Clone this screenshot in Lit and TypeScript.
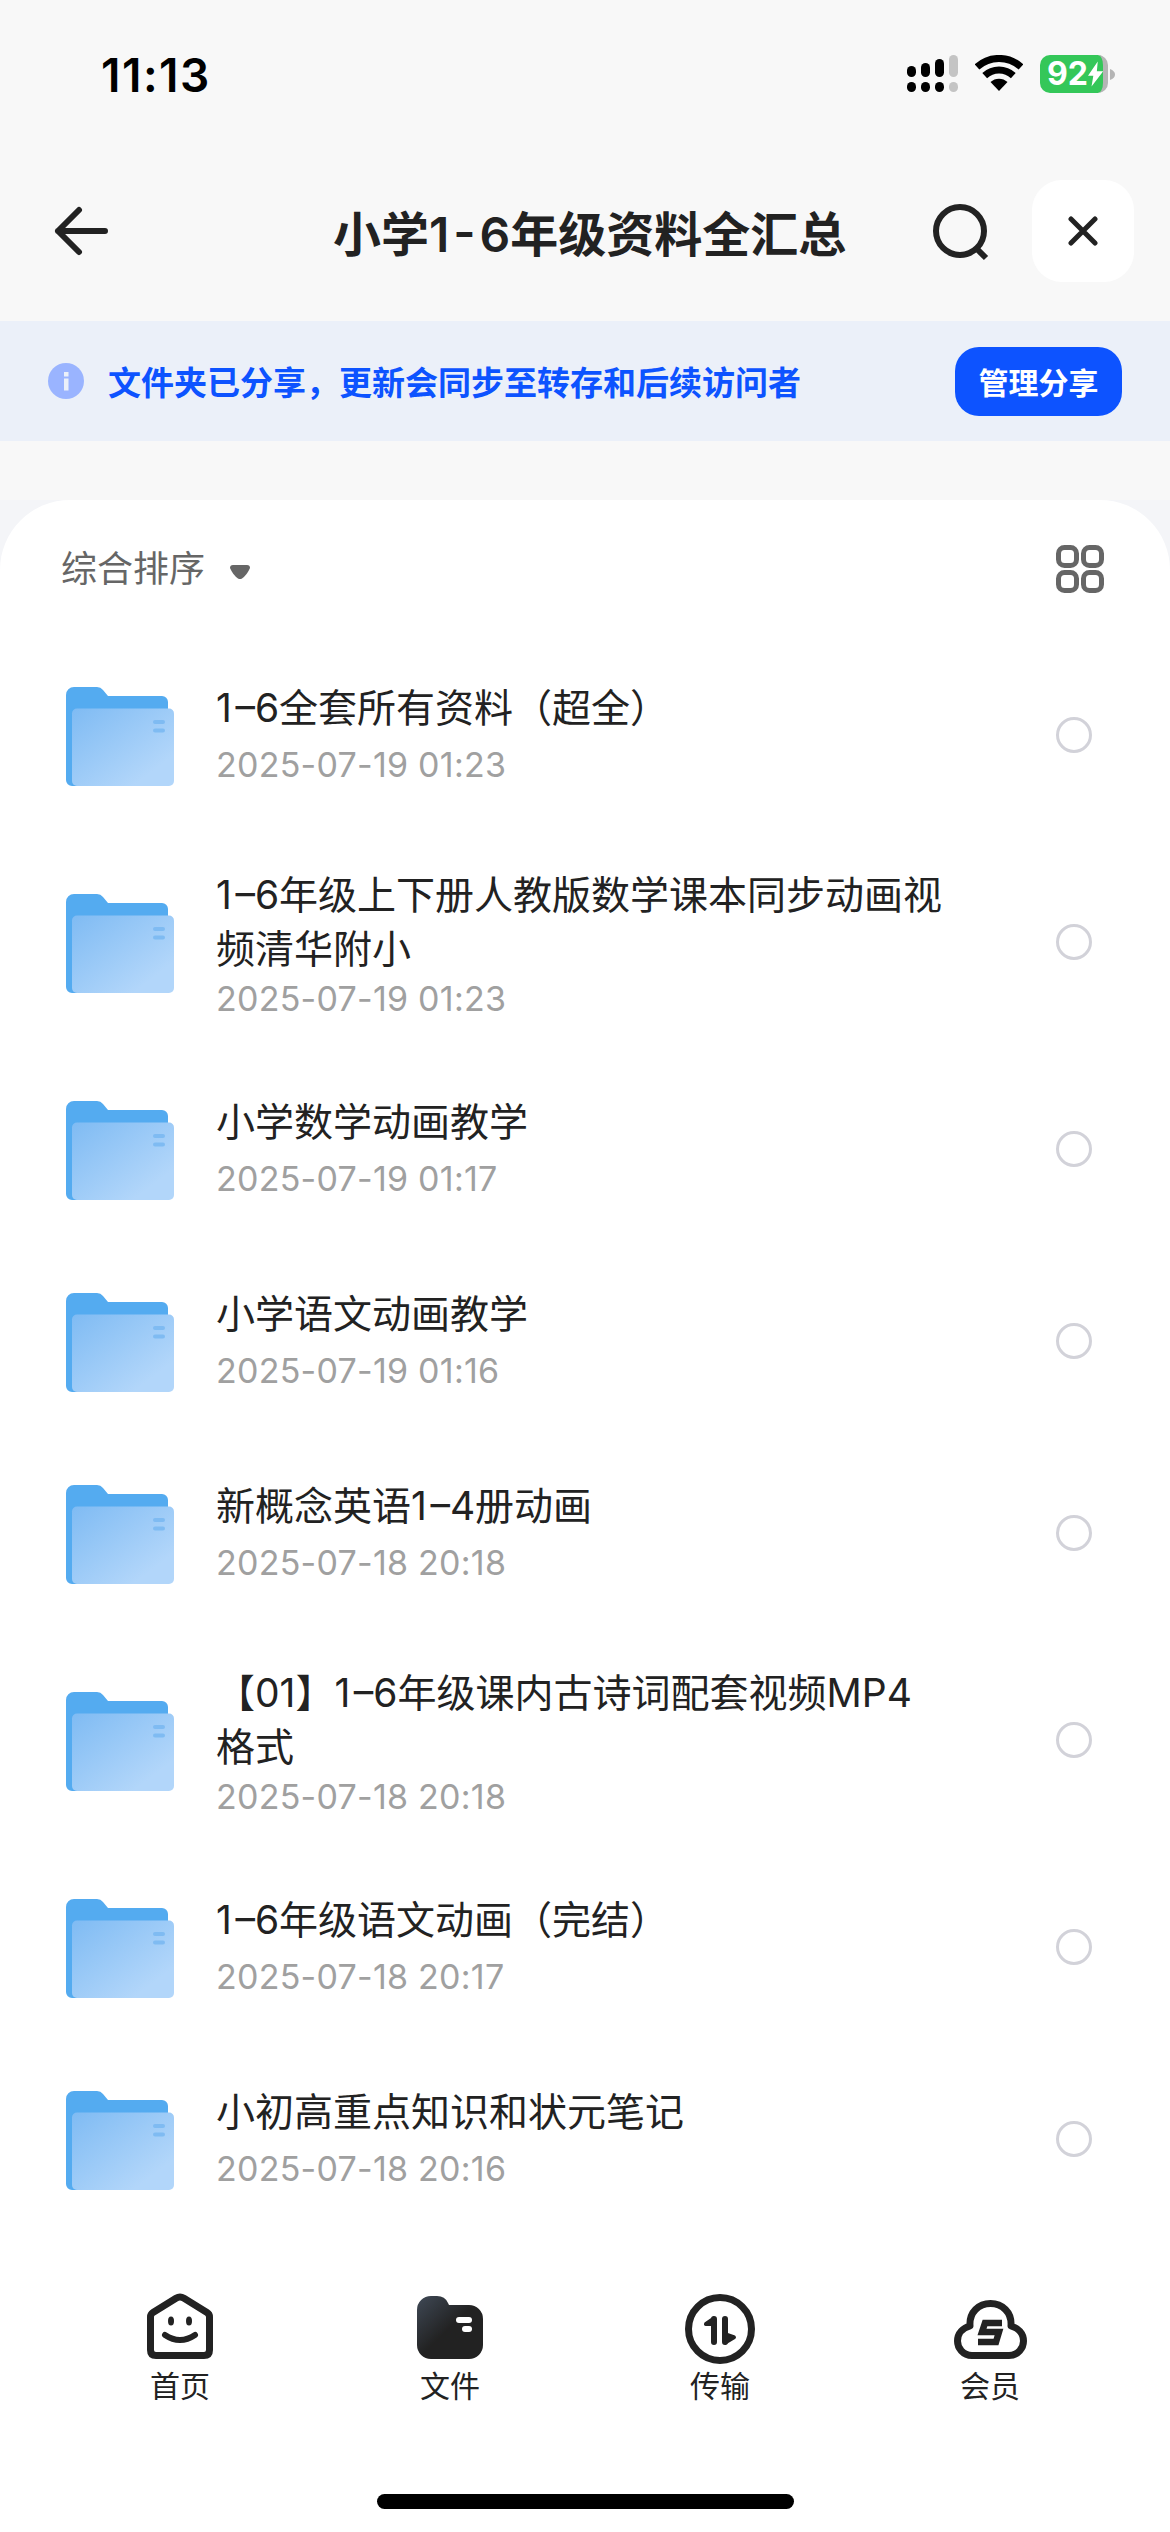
import { LitElement, html, css, svg } from 'lit';
import { customElement } from 'lit/decorators.js';
import { classMap } from 'lit/directives/class-map.js';

const FONT = css`Inter, "Noto Sans CJK SC", sans-serif`;

// hair space before the dash: the reference's digits sit wider than Inter's
const DASH = '\u200A–';

const files = [
  { name: `1${DASH}6全套所有资料（超全）`, date: '2025-07-19 01:23' },
  { name: `1${DASH}6年级上下册人教版数学课本同步动画视频清华附小`, date: '2025-07-19 01:23', two: true },
  { name: '小学数学动画教学', date: '2025-07-19 01:17' },
  { name: '小学语文动画教学', date: '2025-07-19 01:16' },
  { name: `新概念英语1${DASH}4册动画`, date: '2025-07-18 20:18' },
  { name: `【01】1${DASH}6年级课内古诗词配套视频MP4格式`, date: '2025-07-18 20:18', two: true },
  { name: `1${DASH}6年级语文动画（完结）`, date: '2025-07-18 20:17' },
  { name: '小初高重点知识和状元笔记', date: '2025-07-18 20:16' },
];

const folderIcon = html`<svg class="folder" width="108" height="99" viewBox="0 0 108 99">
  <defs>
    <linearGradient id="front" x1="0" y1="0" x2="1" y2="1">
      <stop offset="0" stop-color="#7fbbf3" />
      <stop offset="0.8" stop-color="#b2d6fa" />
    </linearGradient>
  </defs>
  <path fill="#54abf0" d="M0 8a8 8 0 0 1 8-8h23a8 8 0 0 1 6 3l5 6h54a6 6 0 0 1 6 6v78a6 6 0 0 1-6 6H6a6 6 0 0 1-6-6z" />
  <rect x="6" y="21.5" width="102" height="77.5" rx="5" fill="url(#front)" />
  <rect x="87" y="33" width="12" height="4" rx="2" fill="#7fbbf2" />
  <rect x="87" y="41.5" width="12" height="4" rx="2" fill="#7fbbf2" />
</svg>`;

const tabs = [
  {
    label: '首页',
    icon: html`<svg width="66" height="66" viewBox="0 0 66 66" fill="none" stroke="#222">
      <path stroke-width="7" stroke-linejoin="round" d="M6 19.5 29 5.2q4-2.4 8 0l23 14.3q2.500 1.500 2.500 4.500V57q0 5.500-5.500 5.500H9q-5.500 0-5.500-5.500V24q0-3 2.500-4.500z" />
      <ellipse cx="24" cy="28" rx="3" ry="4.500" fill="#222" stroke="none" />
      <ellipse cx="42" cy="28" rx="3" ry="4.500" fill="#222" stroke="none" />
      <path stroke-width="6" stroke-linecap="round" d="M18 42q15 10 30 0" />
    </svg>`,
  },
  {
    label: '文件',
    icon: html`<svg width="66" height="63" viewBox="0 0 66 63">
      <defs>
        <linearGradient id="filetab" x1="0" y1="0" x2="1" y2="1">
          <stop offset="0" stop-color="#3f4956" />
          <stop offset="0.5" stop-color="#222" />
        </linearGradient>
      </defs>
      <path fill="url(#filetab)" d="M0 14A14 14 0 0 1 14 0h6q8 0 11 7l1 2h20a14 14 0 0 1 14 14v26a14 14 0 0 1-14 14H14A14 14 0 0 1 0 49z" />
      <rect x="39" y="21" width="16" height="6" rx="3" fill="#fff" />
      <rect x="45" y="30" width="10" height="6" rx="3" fill="#fff" />
    </svg>`,
  },
  {
    label: '传输',
    icon: html`<svg class="lower" width="70" height="70" viewBox="0 0 70 70" fill="none" stroke="#222">
      <circle cx="35" cy="35" r="31.500" stroke-width="7" />
      <path stroke-width="6" stroke-linecap="round" d="M29 25v23M40 25v23" />
      <path fill="#222" stroke="none" d="M29 22 19.500 28.500q-1.500 3 1 3.500H30zM40 38l10 3.500q2 2 0 3.500l-10 6z" />
    </svg>`,
  },
  {
    label: '会员',
    icon: html`<svg width="73" height="59" viewBox="0 0 73 59" fill="none" stroke="#222">
      <path stroke-width="7" stroke-linejoin="round" d="M18 55.500C9 55.500 3.500 48 3.500 41 3.500 33 9 28 16 26 15 12 25 3.500 36.500 3.500 48 3.500 58 12 57 26c7 2 12.500 7 12.500 15 0 7-5.500 14.500-14.500 14.500z" />
      <path stroke-width="6.500" stroke-linejoin="miter" d="M48 23H31l-3 9h17l-3 10H24" />
    </svg>`,
  },
];

const statusBars = svg`
  <rect x="0" y="11" width="9" height="11" rx="4.500" />
  <rect x="14" y="8" width="9" height="14" rx="4.500" />
  <rect x="28" y="4" width="9" height="18" rx="4.500" />
  <rect x="42" y="0" width="9" height="22" rx="4.500" fill="#c4c4c4" />
  <rect x="0" y="27" width="9" height="10" rx="4.500" />
  <rect x="14" y="27" width="9" height="10" rx="4.500" />
  <rect x="28" y="27" width="9" height="10" rx="4.500" />
  <rect x="42" y="27" width="9" height="10" rx="4.500" fill="#c4c4c4" />
`;

@customElement('app-root')
export class AppRoot extends LitElement {
  static styles = css`
    :host {
      display: block;
      width: 1170px;
      height: 2532px;
      overflow: hidden;
      background: #f8f8f8;
      font-family: ${FONT};
      color: #222;
    }

    /* status bar */
    .status {
      height: 180px;
      box-sizing: border-box;
      padding: 55px 55px 0 101px;
      display: flex;
      align-items: flex-start;
    }
    .time {
      font-size: 46px;
      font-weight: 600;
      line-height: 40px;
      letter-spacing: 1.500px;
      color: #000;
      flex: 1;
    }
    .status-icons {
      display: flex;
      align-items: flex-start;
      gap: 17px;
    }
    .battery {
      display: flex;
      align-items: center;
      gap: 2px;
    }
    .cell {
      width: 68px;
      height: 38px;
      box-sizing: border-box;
      background: #34c759;
      border-right: 5px solid #b5b5b5;
      border-radius: 10px;
      padding-left: 7px;
      display: flex;
      align-items: center;
      color: #fff;
      font-size: 32px;
      font-weight: 700;
      line-height: 38px;
    }

    /* header */
    .header {
      height: 102px;
      display: flex;
      align-items: center;
      padding: 0 36px 0 53px;
    }
    .title {
      flex: 1;
      padding-left: 220px;
      font-size: 48px;
      font-weight: 600;
      white-space: nowrap;
    }
    .close {
      width: 102px;
      height: 102px;
      margin-left: 42px;
      border-radius: 30px;
      background: #fff;
      display: flex;
      align-items: center;
      justify-content: center;
    }

    /* banner */
    .banner {
      margin-top: 39px;
      height: 120px;
      background: #ebf0f9;
      display: flex;
      align-items: center;
      padding: 0 48px 0 48px;
      gap: 24px;
    }
    .banner-text {
      flex: 1;
      color: #0d53ff;
      font-size: 33px;
      font-weight: 600;
    }
    .manage {
      width: 167px;
      height: 69px;
      border-radius: 24px;
      background: #0d53ff;
      color: #fff;
      font-size: 30px;
      font-weight: 600;
      display: flex;
      align-items: center;
      justify-content: center;
    }

    /* sheet */
    .sheet-wrap {
      margin-top: 59px;
      background: #f4f5f8;
    }
    .sheet {
      height: 2032px;
      background: #fff;
      border-radius: 70px 70px 0 0;
    }
    .sort {
      height: 138px;
      box-sizing: border-box;
      padding: 45px 66px 0 61px;
      display: flex;
      align-items: flex-start;
    }
    .sort-label {
      font-size: 36px;
      line-height: 48px;
      color: #666;
    }
    .caret {
      margin: 18px 0 0 25px;
      flex: 1;
    }

    /* list */
    .row {
      height: 192px;
      box-sizing: border-box;
      padding: 0 78px 0 66px;
      display: flex;
      align-items: center;
    }
    .row.two {
      height: 222px;
    }
    .folder {
      flex: none;
      margin-top: 4px;
    }
    .info {
      width: 730px;
      margin-left: 42px;
      flex: 1;
    }
    .row.two .info {
      padding-top: 8px;
    }
    .name {
      width: 730px;
      font-size: 39px;
      line-height: 54px;
    }
    .date {
      margin-top: 7px;
      font-size: 34px;
      line-height: 46px;
      letter-spacing: 0.250px;
      color: #a0a0a0;
    }
    .row.two .date {
      margin-top: 0;
    }
    .radio {
      width: 36px;
      height: 36px;
      box-sizing: border-box;
      border: 3.500px solid #d2d2d9;
      border-radius: 50%;
      flex: none;
      margin-top: 1px;
    }

    /* tab bar */
    .tabs {
      margin-top: 59px;
      padding: 0 45px;
      display: grid;
      grid-template-columns: repeat(4, 270px);
    }
    .tab {
      display: flex;
      flex-direction: column;
      align-items: center;
    }
    .tab-icon {
      height: 66px;
      display: flex;
      align-items: flex-end;
    }
    .tab-icon .lower {
      margin-bottom: -5px;
    }
    .tab-label {
      margin-top: 6px;
      font-size: 30px;
      line-height: 42px;
    }
    .home-bar {
      width: 417px;
      height: 15px;
      margin: 87px auto 0;
      border-radius: 8px;
      background: #000;
    }
  `;

  render() {
    return html`
      <div class="status">
        <div class="time">11:13</div>
        <div class="status-icons">
          <svg width="51" height="37" viewBox="0 0 51 37" fill="#000">${statusBars}</svg>
          <svg width="48" height="36" viewBox="0 0 48 36" fill="none" stroke="#000" stroke-width="7">
            <path d="M2 12A32.500 32.500 0 0 1 46 12" />
            <path d="M9.700 20.600A21 21 0 0 1 38.300 20.600" />
            <path fill="#000" stroke="none" d="M24 36 15.500 27A12.500 12.500 0 0 1 32.500 27z" />
          </svg>
          <div class="battery">
            <div class="cell">
              92
              <svg width="17" height="28" viewBox="0 0 17 28" fill="#fff"><path d="M11 0 0 16h6L4 28 17 11h-7z" /></svg>
            </div>
            <svg width="5" height="11" viewBox="0 0 5 11" fill="#b5b5b5"><path d="M0 0q5 2 5 5.500T0 11z" /></svg>
          </div>
        </div>
      </div>

      <div class="header">
        <svg width="60" height="50" viewBox="0 0 60 50" fill="none" stroke="#222" stroke-width="6" stroke-linecap="round" stroke-linejoin="round">
          <path d="M5 25h47M26 4 5 25l21 21" />
        </svg>
        <div class="title">小学1\u200A-\u200A6年级资料全汇总</div>
        <svg width="60" height="60" viewBox="0 0 60 60" fill="none" stroke="#222" stroke-width="6">
          <circle cx="30" cy="30" r="24" />
          <path d="M47 48l9 9" />
        </svg>
        <div class="close">
          <svg width="30" height="30" viewBox="0 0 30 30" fill="none" stroke="#222" stroke-width="5" stroke-linecap="round">
            <path d="M3 3l24 24M27 3 3 27" />
          </svg>
        </div>
      </div>

      <div class="banner">
        <svg width="36" height="36" viewBox="0 0 36 36">
          <circle cx="18" cy="18" r="18" fill="#9ab4ff" />
          <rect x="16" y="9" width="4.500" height="4.500" fill="#ebf0f9" />
          <rect x="16" y="15.500" width="4.500" height="12" fill="#ebf0f9" />
        </svg>
        <div class="banner-text">文件夹已分享，更新会同步至转存和后续访问者</div>
        <div class="manage">管理分享</div>
      </div>

      <div class="sheet-wrap">
        <div class="sheet">
          <div class="sort">
            <div class="sort-label">综合排序</div>
            <div class="caret">
              <svg width="20" height="14" viewBox="0 0 20 14" fill="#666"><path d="M3 0h14q3 0 3 3-3 7-8 10.500-2 1-4 0Q3 10 0 3q0-3 3-3z" /></svg>
            </div>
            <svg width="48" height="48" viewBox="0 0 48 48" fill="none" stroke="#666" stroke-width="5">
              <rect x="2.500" y="2.500" width="18" height="18" rx="6" />
              <rect x="27.500" y="2.500" width="18" height="18" rx="6" />
              <rect x="2.500" y="27.500" width="18" height="18" rx="6" />
              <rect x="27.500" y="27.500" width="18" height="18" rx="6" />
            </svg>
          </div>

          ${files.map(
            (f) => html`
              <div class="row ${classMap({ two: !!f.two })}">
                ${folderIcon}
                <div class="info">
                  <div class="name">${f.name}</div>
                  <div class="date">${f.date}</div>
                </div>
                <div class="radio"></div>
              </div>
            `,
          )}

          <div class="tabs">
            ${tabs.map(
              (t) => html`
                <div class="tab">
                  <div class="tab-icon">${t.icon}</div>
                  <div class="tab-label">${t.label}</div>
                </div>
              `,
            )}
          </div>
          <div class="home-bar"></div>
        </div>
      </div>
    `;
  }
}
